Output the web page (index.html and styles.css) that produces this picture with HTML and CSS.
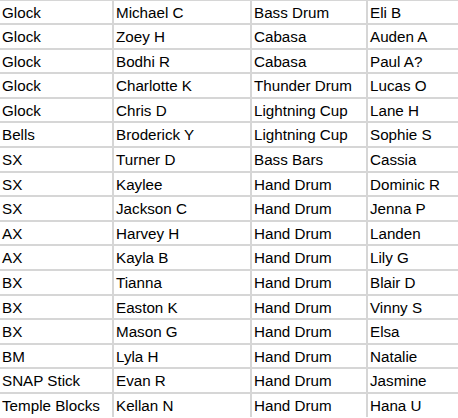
FILE: index.html
```html
<!DOCTYPE html>
<html lang="en">
<head>
<meta charset="utf-8">
<title>Roster</title>
<link rel="stylesheet" href="styles.css">
</head>
<body>
<div class="sheet">
  <div class="cell">Glock</div><div class="cell">Michael C</div><div class="cell">Bass Drum</div><div class="cell">Eli B</div>
  <div class="cell">Glock</div><div class="cell">Zoey H</div><div class="cell">Cabasa</div><div class="cell">Auden A</div>
  <div class="cell">Glock</div><div class="cell">Bodhi R</div><div class="cell">Cabasa</div><div class="cell">Paul A?</div>
  <div class="cell">Glock</div><div class="cell">Charlotte K</div><div class="cell">Thunder Drum</div><div class="cell">Lucas O</div>
  <div class="cell">Glock</div><div class="cell">Chris D</div><div class="cell">Lightning Cup</div><div class="cell">Lane H</div>
  <div class="cell">Bells</div><div class="cell">Broderick Y</div><div class="cell">Lightning Cup</div><div class="cell">Sophie S</div>
  <div class="cell">SX</div><div class="cell">Turner D</div><div class="cell">Bass Bars</div><div class="cell">Cassia</div>
  <div class="cell">SX</div><div class="cell">Kaylee</div><div class="cell">Hand Drum</div><div class="cell">Dominic R</div>
  <div class="cell">SX</div><div class="cell">Jackson C</div><div class="cell">Hand Drum</div><div class="cell">Jenna P</div>
  <div class="cell">AX</div><div class="cell">Harvey H</div><div class="cell">Hand Drum</div><div class="cell">Landen</div>
  <div class="cell">AX</div><div class="cell">Kayla B</div><div class="cell">Hand Drum</div><div class="cell">Lily G</div>
  <div class="cell">BX</div><div class="cell">Tianna</div><div class="cell">Hand Drum</div><div class="cell">Blair D</div>
  <div class="cell">BX</div><div class="cell">Easton K</div><div class="cell">Hand Drum</div><div class="cell">Vinny S</div>
  <div class="cell">BX</div><div class="cell">Mason G</div><div class="cell">Hand Drum</div><div class="cell">Elsa</div>
  <div class="cell">BM</div><div class="cell">Lyla H</div><div class="cell">Hand Drum</div><div class="cell">Natalie</div>
  <div class="cell">SNAP Stick</div><div class="cell">Evan R</div><div class="cell">Hand Drum</div><div class="cell">Jasmine</div>
  <div class="cell">Temple Blocks</div><div class="cell">Kellan N</div><div class="cell">Hand Drum</div><div class="cell">Hana U</div>
</div>
</body>
</html>
```
FILE: styles.css
```css
html, body {
  margin: 0;
  padding: 0;
  background: #ffffff;
  overflow: hidden;
}

.sheet {
  margin-top: -1.5px;
  display: grid;
  grid-template-columns: 112px 138px 116px 92px;
  grid-auto-rows: 24.6px;
  font-family: "Liberation Sans", Arial, sans-serif;
  font-size: 15.2px;
  color: #000000;
}

.cell {
  box-sizing: border-box;
  border-top: 2px solid #d6d6d6;
  padding: 2px 0 0 2px;
  line-height: 20.6px;
  white-space: nowrap;
  overflow: hidden;
}

.cell:not(:nth-child(4n+1)) {
  border-left: 2px solid #d6d6d6;
}
```
